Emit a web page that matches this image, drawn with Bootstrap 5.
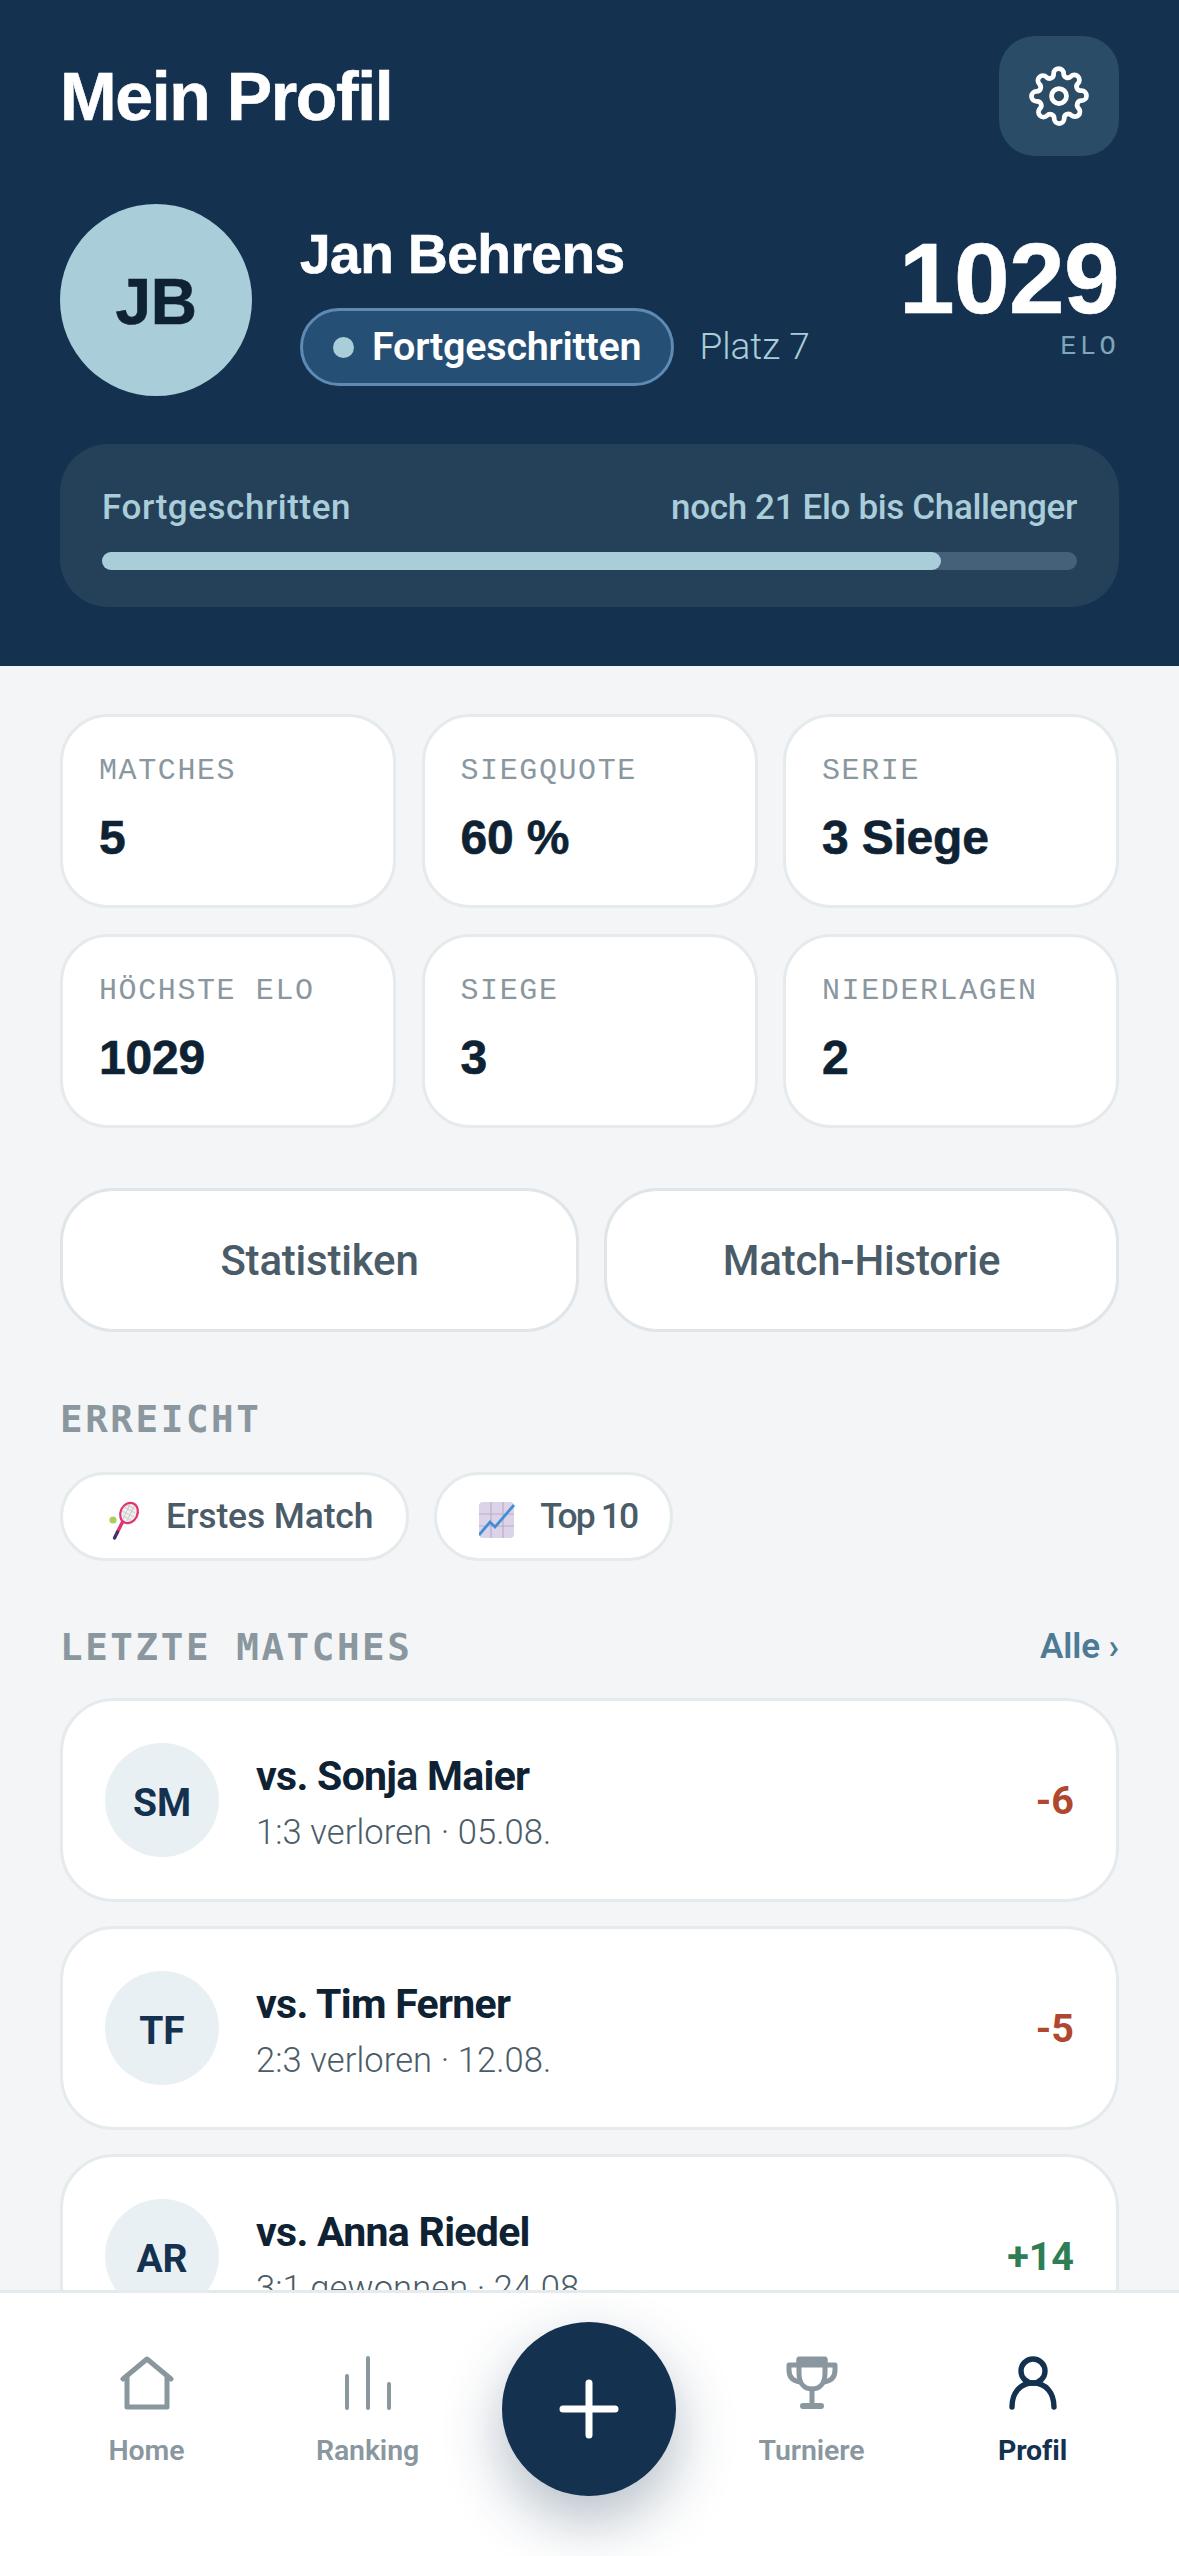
<!DOCTYPE html>
<html lang="de">
<head>
<meta charset="utf-8">
<title>Mein Profil</title>
<link href="https://cdn.jsdelivr.net/npm/bootstrap@5.3.0/dist/css/bootstrap.min.css" rel="stylesheet">
<style>
html,body{margin:0;height:2556px;width:1179px;overflow:hidden;background:#f3f5f6;}
body{font-family:Roboto,"Liberation Sans",sans-serif;color:#0e2233;}
.app-shell{height:2556px;width:1179px;}
.head-fnt{font-family:"Liberation Sans",Arimo,sans-serif;font-weight:700;-webkit-text-stroke:.6px currentColor;}
.mono-fnt{font-family:"Liberation Mono",monospace;}
.mono-bold{font-family:"DejaVu Sans Mono",monospace;}
.hero{background:#143250;height:666px;padding:36px 60px 0;flex:none;}
.hero-title{font-size:68px;line-height:120px;padding-bottom:6px;height:120px;letter-spacing:-1.4px;color:#fff;margin:0;}
.gear-btn{width:120px;height:120px;border-radius:36px;background:#2a4c66;border:0;padding:0;}
.hero-profile{margin-top:48px;height:192px;}
.avatar-lg{width:192px;height:192px;background:#a9cdd9;color:#0e2233;font-size:64px;letter-spacing:-.5px;flex:none;margin-right:48px;padding-top:3px;}
.hero-name{font-size:55px;line-height:60px;color:#fff;letter-spacing:-.5px;margin-top:20px;}
.rank-chip{height:78px;padding:0 30px;border:3px solid #5f8ab3;background:#264f75;color:#fff;font-size:39.5px;font-weight:600;letter-spacing:-.25px;border-radius:39px;margin-top:24px;}
.rank-dot{width:21px;height:21px;background:#a9cdd9;margin-right:18px;}
.rank-place{font-size:37px;font-weight:300;color:#a9cdd9;margin:24px 0 0 25px;}
.elo-num{font-size:100px;line-height:96px;color:#fff;letter-spacing:-.6px;margin-top:26px;}
.elo-label{font-size:27px;color:#7fa6b8;letter-spacing:3.4px;line-height:36px;margin-top:3px;}
.progress-box{margin-top:48px;height:163px;background:#254059;border-radius:48px;padding:42px 42px 0;color:#a9cdd9;font-size:35px;font-weight:500;line-height:44px;letter-spacing:-.35px;}
.label-wide{letter-spacing:.55px;}
.bar-track{height:18px;background:#46607a;border-radius:9px;margin-top:22px;}
.bar-fill{height:18px;background:#a9cdd9;border-radius:9px;}
.main-scroll{padding:48px 60px 0;overflow:hidden;min-height:0;}
.stat-grid{display:grid;grid-template-columns:repeat(3,1fr);gap:26px 25.5px;}
.stat-box{height:194px;background:#fff;border:3px solid #e5eaed;border-radius:48px;padding:36px 36px 0;}
.stat-label{font-size:30px;line-height:36px;color:#8a979f;letter-spacing:1.6px;white-space:nowrap;}
.stat-value{font-size:48px;line-height:54px;margin-top:22px;letter-spacing:-.2px;color:#0e2233;}
.action-row{margin-top:60px;gap:25px;}
.action-btn{height:144px;background:#fff;border:3px solid #dfe5e9;border-radius:54px;color:#4a5c68;font-size:42px;font-weight:500;letter-spacing:-.2px;flex:1 1 0;padding:0;}
.action-first{flex:0 0 519px;}
.section-head{font-size:37.5px;font-weight:700;color:#8a979f;letter-spacing:2.6px;line-height:48px;}
.sec-first{margin-top:63px;}
.badge-row{margin-top:29px;gap:25px;}
.trophy-chip{height:89px;background:#fff;border:3px solid #e5eaed;border-radius:45px;color:#4a5c68;font-size:35.5px;font-weight:500;padding:0 33px 0 42px;letter-spacing:-.15px;}
.trophy-chip svg{margin-right:19px;}
.text-tight{letter-spacing:-1.9px;}
.sec-second{margin-top:60px;}
.all-link{font-size:35px;font-weight:600;color:#4d7a94;text-decoration:none;letter-spacing:-.1px;}
.match-list{margin-top:24px;gap:24px;}
.match-row{height:204px;flex:none;background:#fff;border:3px solid #e5eaed;border-radius:54px;padding:0 42px;}
.match-av{width:114px;height:114px;background:#e9f0f3;color:#143250;font-size:39px;font-weight:700;flex:none;margin-right:37px;padding-top:8px;}
.match-info{padding-top:6px;}
.match-name{font-size:41px;line-height:48px;font-weight:700;color:#0e2233;letter-spacing:-.7px;}
.match-sub{font-size:34.5px;line-height:42px;font-weight:300;color:#4a5c68;margin-top:11px;letter-spacing:.1px;}
.delta-loss{color:#b0472f;}
.delta-win{color:#2e7d55;}
.match-delta{font-size:39.5px;font-weight:700;padding-top:3px;}
.bottom-nav{height:266px;flex:none;background:#fff;border-top:3px solid #e5eaed;padding:0 36px;position:relative;z-index:2;}
.nav-cell{flex:1 1 0;padding-top:63px;color:#8a979f;font-size:28.5px;font-weight:600;line-height:36px;text-decoration:none;letter-spacing:-.1px;}
.nav-cell svg{display:block;margin-bottom:23px;}
.nav-on{color:#143250;font-weight:700;}
.fab-cell{flex:1 1 0;padding:29px 2px 0 0;}
.fab-btn{width:174px;height:174px;background:#143250;border:0;padding:0;box-shadow:0 24px 60px rgba(20,50,80,.32);}
</style>
</head>
<body>
<div class="app-shell d-flex flex-column">
  <header class="hero">
    <div class="d-flex justify-content-between align-items-center">
      <h1 class="hero-title head-fnt">Mein Profil</h1>
      <button class="gear-btn d-flex align-items-center justify-content-center" aria-label="Einstellungen">
        <svg width="60" height="60" viewBox="0 0 24 24" fill="none" stroke="#fff" stroke-width="1.9" stroke-linecap="round" stroke-linejoin="round"><circle cx="12" cy="12" r="3"/><path d="M19.4 15a1.65 1.65 0 0 0 .33 1.82l.06.06a2 2 0 1 1-2.83 2.83l-.06-.06a1.65 1.65 0 0 0-2.82 1.17V21a2 2 0 1 1-4 0v-.09a1.65 1.65 0 0 0-2.82-1.12l-.06.06a2 2 0 1 1-2.83-2.83l.06-.06a1.65 1.65 0 0 0-1.17-2.82H3a2 2 0 1 1 0-4h.09a1.65 1.65 0 0 0 1.12-2.82l-.06-.06a2 2 0 1 1 2.83-2.83l.06.06a1.65 1.65 0 0 0 2.82-1.17V3a2 2 0 1 1 4 0v.09a1.65 1.65 0 0 0 2.82 1.12l.06-.06a2 2 0 1 1 2.83 2.83l-.06.06a1.65 1.65 0 0 0 1.17 2.82H21a2 2 0 1 1 0 4h-.09a1.65 1.65 0 0 0-1.51 1z"/></svg>
      </button>
    </div>
    <div class="hero-profile d-flex">
      <div class="avatar-lg rounded-circle d-flex align-items-center justify-content-center head-fnt">JB</div>
      <div class="flex-grow-1">
        <div class="hero-name head-fnt">Jan Behrens</div>
        <div class="d-flex align-items-center">
          <span class="rank-chip d-inline-flex align-items-center"><span class="rank-dot rounded-circle"></span>Fortgeschritten</span>
          <span class="rank-place">Platz 7</span>
        </div>
      </div>
      <div class="text-end">
        <div class="elo-num head-fnt">1029</div>
        <div class="elo-label mono-fnt">ELO</div>
      </div>
    </div>
    <div class="progress-box">
      <div class="d-flex justify-content-between"><span class="label-wide">Fortgeschritten</span><span>noch 21 Elo bis Challenger</span></div>
      <div class="bar-track"><div class="bar-fill" style="width:86%"></div></div>
    </div>
  </header>

  <main class="main-scroll flex-grow-1">
    <div class="stat-grid">
      <div class="stat-box"><div class="stat-label mono-fnt">MATCHES</div><div class="stat-value head-fnt">5</div></div>
      <div class="stat-box"><div class="stat-label mono-fnt">SIEGQUOTE</div><div class="stat-value head-fnt">60 %</div></div>
      <div class="stat-box"><div class="stat-label mono-fnt">SERIE</div><div class="stat-value head-fnt">3 Siege</div></div>
      <div class="stat-box"><div class="stat-label mono-fnt">HÖCHSTE ELO</div><div class="stat-value head-fnt">1029</div></div>
      <div class="stat-box"><div class="stat-label mono-fnt">SIEGE</div><div class="stat-value head-fnt">3</div></div>
      <div class="stat-box"><div class="stat-label mono-fnt">NIEDERLAGEN</div><div class="stat-value head-fnt">2</div></div>
    </div>

    <div class="action-row d-flex">
      <button class="action-btn action-first">Statistiken</button>
      <button class="action-btn">Match-Historie</button>
    </div>

    <div class="section-head mono-bold sec-first">ERREICHT</div>
    <div class="badge-row d-flex">
      <span class="trophy-chip d-inline-flex align-items-center">
        <svg width="42" height="50" viewBox="0 0 42 50"><path d="M17 31 L12.5 40" stroke="#e0336f" stroke-width="3.4" stroke-linecap="round"/><path d="M12.5 40 L9.5 46" stroke="#4a2d6e" stroke-width="3.4" stroke-linecap="round"/><ellipse cx="24" cy="21" rx="8.5" ry="10.5" transform="rotate(25 24 21)" fill="#eee" stroke="#e0336f" stroke-width="2.2"/><path d="M17 19l12 6M19 15l11 6M22 13l8 4M18 24l8 4M25 12l-7 15M29 14l-7 15" stroke="#c5c5cc" stroke-width=".9"/><path d="M18 29 L17 31" stroke="#e0336f" stroke-width="3"/><circle cx="8" cy="28" r="3.6" fill="#a7d05a"/></svg>
        Erstes Match
      </span>
      <span class="trophy-chip d-inline-flex align-items-center">
        <svg width="42" height="50" viewBox="0 0 42 50"><rect x="0" y="10" width="35" height="36" rx="4" fill="#ddd3e8"/><path d="M12 10V46M24 10V46M0 22H35M0 34H35" stroke="#b9aec9" stroke-width="1.2"/><path d="M0 43 L11 30 L16 35 L35 13" fill="none" stroke="#3f8fd6" stroke-width="2.8"/></svg>
        <span class="text-tight">Top 10</span>
      </span>
    </div>

    <div class="d-flex justify-content-between align-items-center sec-second">
      <div class="section-head mono-bold">LETZTE MATCHES</div>
      <a class="all-link" href="#">Alle ›</a>
    </div>
    <div class="match-list d-flex flex-column">
      <div class="match-row d-flex align-items-center">
        <div class="match-av rounded-circle d-flex align-items-center justify-content-center">SM</div>
        <div class="match-info flex-grow-1"><div class="match-name">vs. Sonja Maier</div><div class="match-sub">1:3 verloren · 05.08.</div></div>
        <div class="match-delta delta-loss">-6</div>
      </div>
      <div class="match-row d-flex align-items-center">
        <div class="match-av rounded-circle d-flex align-items-center justify-content-center">TF</div>
        <div class="match-info flex-grow-1"><div class="match-name">vs. Tim Ferner</div><div class="match-sub">2:3 verloren · 12.08.</div></div>
        <div class="match-delta delta-loss">-5</div>
      </div>
      <div class="match-row d-flex align-items-center">
        <div class="match-av rounded-circle d-flex align-items-center justify-content-center">AR</div>
        <div class="match-info flex-grow-1"><div class="match-name">vs. Anna Riedel</div><div class="match-sub">3:1 gewonnen · 24.08.</div></div>
        <div class="match-delta delta-win">+14</div>
      </div>
    </div>
  </main>

  <nav class="bottom-nav d-flex">
    <a class="nav-cell d-flex flex-column align-items-center" href="#">
      <svg width="54" height="54" viewBox="0 0 54 54" fill="none" stroke="#8a979f" stroke-width="5" stroke-linecap="round" stroke-linejoin="round"><path d="M3 23 27 3l24 20"/><path d="M7 20v31h40V20"/></svg>
      Home</a>
    <a class="nav-cell d-flex flex-column align-items-center" href="#">
      <svg width="54" height="54" viewBox="0 0 54 54" fill="none" stroke="#8a979f" stroke-width="4" stroke-linecap="round"><path d="M6 20v32M27 2v50M48 28v24"/></svg>
      Ranking</a>
    <div class="fab-cell d-flex justify-content-center">
      <button class="fab-btn rounded-circle d-flex align-items-center justify-content-center" aria-label="Neu">
        <svg width="60" height="60" viewBox="0 0 60 60" fill="none" stroke="#fff" stroke-width="7" stroke-linecap="round"><path d="M30 4v52M4 30h52"/></svg>
      </button>
    </div>
    <a class="nav-cell d-flex flex-column align-items-center" href="#">
      <svg width="54" height="54" viewBox="0 0 54 54" fill="none" stroke="#8a979f" stroke-width="5" stroke-linecap="round" stroke-linejoin="round"><path d="M14 3h26v14c0 10-5 16-13 16S14 27 14 17z"/><path d="M14 9H4v5c0 7 4 11 11 12M40 9h10v5c0 7-4 11-11 12"/><path d="M27 33v15"/><path d="M18 50h18" stroke-width="6"/><path d="M14 4h26v5H14z" fill="#8a979f"/></svg>
      Turniere</a>
    <a class="nav-cell nav-on d-flex flex-column align-items-center" href="#">
      <svg width="54" height="54" viewBox="0 0 54 54" fill="none" stroke="#143250" stroke-width="5.4" stroke-linecap="round" stroke-linejoin="round"><circle cx="27" cy="15" r="12"/><path d="M6 51c0-14 8-24 21-24s21 10 21 24"/></svg>
      Profil</a>
  </nav>
</div>
</body>
</html>
